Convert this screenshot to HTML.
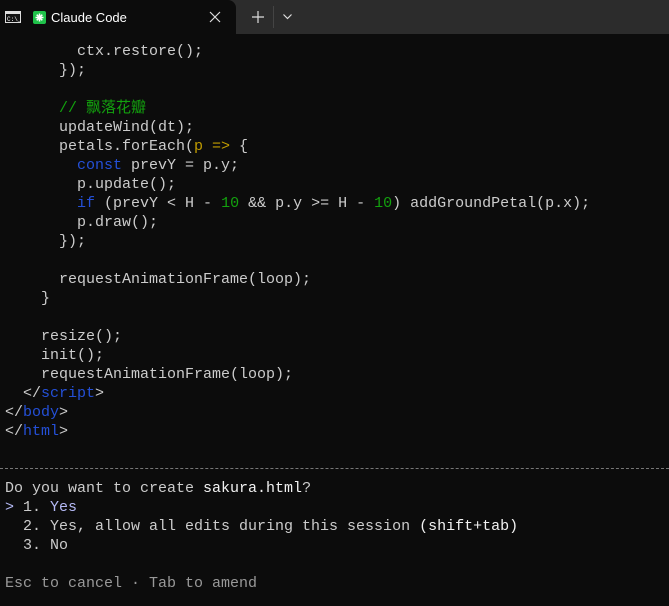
<!DOCTYPE html>
<html><head><meta charset="utf-8"><style>
*{margin:0;padding:0;box-sizing:border-box}
body{width:669px;height:606px;background:#0c0c0c;overflow:hidden;position:relative;font-family:"Liberation Mono","Noto Sans CJK SC",monospace;}
.bar{position:absolute;left:0;top:0;width:669px;height:34px;background:#2c2c2c}
.tab{position:absolute;left:0;top:0;width:236px;height:34px;background:#0c0c0c;border-top-right-radius:8px}
.t{position:absolute;color:#fff;font-family:"Liberation Sans",sans-serif;font-size:13px;left:51px;top:10px}
pre{position:absolute;left:5px;top:42px;font-size:15px;line-height:19px;color:#cccccc;font-family:"Liberation Mono","Noto Sans CJK SC",monospace}
.k{color:#2450d8}.g{color:#13a10e}.y{color:#c19c00}.w{color:#f2f2f2}.b{color:#b4b9f5}.d{color:#999}
.dash{position:absolute;left:0;top:468px;width:669px;border-top:1px dashed #777}
</style></head><body>
<div class="bar"></div>
<div class="tab"></div>
<svg style="position:absolute;left:5px;top:11px" width="16" height="12"><rect x="0.5" y="0.5" width="15" height="11" fill="#111" stroke="#ddd"/><rect x="1" y="1" width="14" height="2" fill="#ddd"/><text x="2" y="10" font-size="6" fill="#fff" font-family="Liberation Mono">C:\_</text></svg>
<svg style="position:absolute;left:33px;top:11px" width="13" height="13"><rect width="13" height="13" rx="2" fill="#1fc24a"/><path d="M6.5 2.5V10.5M2.5 6.5H10.5M3.7 3.7L9.3 9.3M9.3 3.7L3.7 9.3" stroke="#fff" stroke-width="1.5"/></svg>
<div class="t">Claude Code</div>
<svg style="position:absolute;left:209px;top:11px" width="12" height="12"><path d="M1 1L11 11M11 1L1 11" stroke="#ddd" stroke-width="1.2"/></svg>
<svg style="position:absolute;left:252px;top:11px" width="12" height="12"><path d="M6 0V12M0 6H12" stroke="#ddd" stroke-width="1.2"/></svg>
<div style="position:absolute;left:273px;top:6px;width:1px;height:22px;background:#444"></div>
<svg style="position:absolute;left:283px;top:14px" width="9" height="6"><path d="M0.5 0.5L4.5 4.5L8.5 0.5" stroke="#ddd" fill="none" stroke-width="1.2"/></svg>
<pre>        ctx.restore();
      });

      <span class="g">// 飘落花瓣</span>
      updateWind(dt);
      petals.forEach(<span class="y">p =&gt;</span> {
        <span class="k">const</span> prevY = p.y;
        p.update();
        <span class="k">if</span> (prevY &lt; H - <span class="g">10</span> &amp;&amp; p.y &gt;= H - <span class="g">10</span>) addGroundPetal(p.x);
        p.draw();
      });

      requestAnimationFrame(loop);
    }

    resize();
    init();
    requestAnimationFrame(loop);
  &lt;/<span class="k">script</span>&gt;
&lt;/<span class="k">body</span>&gt;
&lt;/<span class="k">html</span>&gt;


Do you want to create <span class="w">sakura.html</span>?
<span class="b">&gt;</span> 1. <span class="b">Yes</span>
  2. Yes, allow all edits during this session <span class="w">(shift+tab)</span>
  3. No

<span class="d">Esc to cancel · Tab to amend</span></pre>
<div class="dash"></div>
</body></html>
